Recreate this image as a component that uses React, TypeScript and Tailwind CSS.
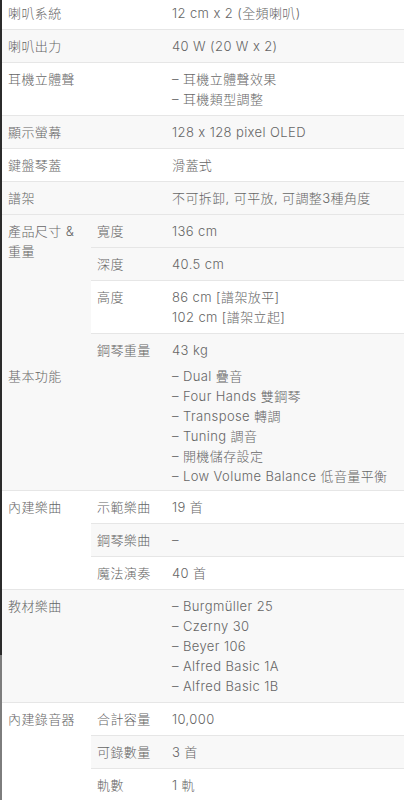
type Sub = { label?: string; lines: string[]; gray?: boolean };
type Section = {
  label: string[];
  gray?: boolean;
  subs: Sub[];
  tight?: boolean;
  noBorder?: boolean;
};

const SECTIONS: Section[] = [
  { label: ["喇叭系統"], subs: [{ lines: ["12 cm x 2 (全頻喇叭)"] }] },
  { label: ["喇叭出力"], gray: true, subs: [{ lines: ["40 W (20 W x 2)"], gray: true }] },
  { label: ["耳機立體聲"], subs: [{ lines: ["– 耳機立體聲效果", "– 耳機類型調整"] }] },
  { label: ["顯示螢幕"], gray: true, subs: [{ lines: ["128 x 128 pixel OLED"], gray: true }] },
  { label: ["鍵盤琴蓋"], subs: [{ lines: ["滑蓋式"] }] },
  { label: ["譜架"], gray: true, subs: [{ lines: ["不可拆卸, 可平放, 可調整3種角度"], gray: true }] },
  {
    label: ["產品尺寸 &", "重量"],
    gray: true,
    noBorder: true,
    subs: [
      { label: "寬度", lines: ["136 cm"], gray: true },
      { label: "深度", lines: ["40.5 cm"], gray: true },
      { label: "高度", lines: ["86 cm [譜架放平]", "102 cm [譜架立起]"] },
      { label: "鋼琴重量", lines: ["43 kg"], gray: true },
    ],
  },
  {
    label: ["基本功能"],
    gray: true,
    tight: true,
    subs: [
      {
        gray: true,
        lines: [
          "– Dual 疊音",
          "– Four Hands 雙鋼琴",
          "– Transpose 轉調",
          "– Tuning 調音",
          "– 開機儲存設定",
          "– Low Volume Balance 低音量平衡",
        ],
      },
    ],
  },
  {
    label: ["內建樂曲"],
    subs: [
      { label: "示範樂曲", lines: ["19 首"] },
      { label: "鋼琴樂曲", lines: ["–"], gray: true },
      { label: "魔法演奏", lines: ["40 首"] },
    ],
  },
  {
    label: ["教材樂曲"],
    gray: true,
    subs: [
      {
        gray: true,
        lines: [
          "– Burgmüller 25",
          "– Czerny 30",
          "– Beyer 106",
          "– Alfred Basic 1A",
          "– Alfred Basic 1B",
        ],
      },
    ],
  },
  {
    label: ["內建錄音器"],
    subs: [
      { label: "合計容量", lines: ["10,000"] },
      { label: "可錄數量", lines: ["3 首"], gray: true },
      { label: "軌數", lines: ["1 軌"] },
    ],
  },
];

function SpecRow({ section }: { section: Section }) {
  const pad = section.tight ? "pt-0 pb-[4px]" : "py-[6px]";
  return (
    <div
      className={`flex ${section.noBorder ? "" : "border-b border-[#e6e6e6]"} ${
        section.gray ? "bg-[#f8f8f8]" : "bg-white"
      }`}
    >
      {/* Main label */}
      <div className={`w-[89px] shrink-0 pl-[6px] ${pad}`}>
        {section.label.map((l) => (
          <div key={l} className="whitespace-nowrap">{l}</div>
        ))}
      </div>

      {/* Sub rows */}
      <div className="flex-1 flex flex-col">
        {section.subs.map((sub, i) => (
          <div
            key={i}
            className={`flex ${
              i < section.subs.length - 1 ? "border-b border-[#e6e6e6]" : ""
            } ${sub.gray ? "bg-[#f8f8f8]" : "bg-white"}`}
          >
            <div className={`w-[75px] shrink-0 pl-[6px] whitespace-nowrap ${pad}`}>{sub.label}</div>
            <div className={`flex-1 pl-[6px] ${pad}`}>
              {sub.lines.map((line) => (
                <div key={line} className="whitespace-nowrap">{line}</div>
              ))}
            </div>
          </div>
        ))}
      </div>
    </div>
  );
}

export default function App() {
  return (
    <div className="flex h-[800px] w-[404px] overflow-hidden bg-white">
      {/* Window edge */}
      <div className="w-[2px] shrink-0 flex flex-col">
        <div className="h-[655px] bg-[#2b2b2b]" />
        <div className="flex-1 bg-[#7d7d7d]" />
      </div>

      <div
        className="flex-1 -mt-[3px] text-[13px] leading-[20px] font-light tracking-[0.4px] text-[#666] [font-variant-ligatures:no-contextual]"
        style={{ fontFamily: '"Inter", "Noto Sans CJK TC", sans-serif' }}
      >
        {SECTIONS.map((s, i) => (
          <SpecRow key={i} section={s} />
        ))}
      </div>
    </div>
  );
}
